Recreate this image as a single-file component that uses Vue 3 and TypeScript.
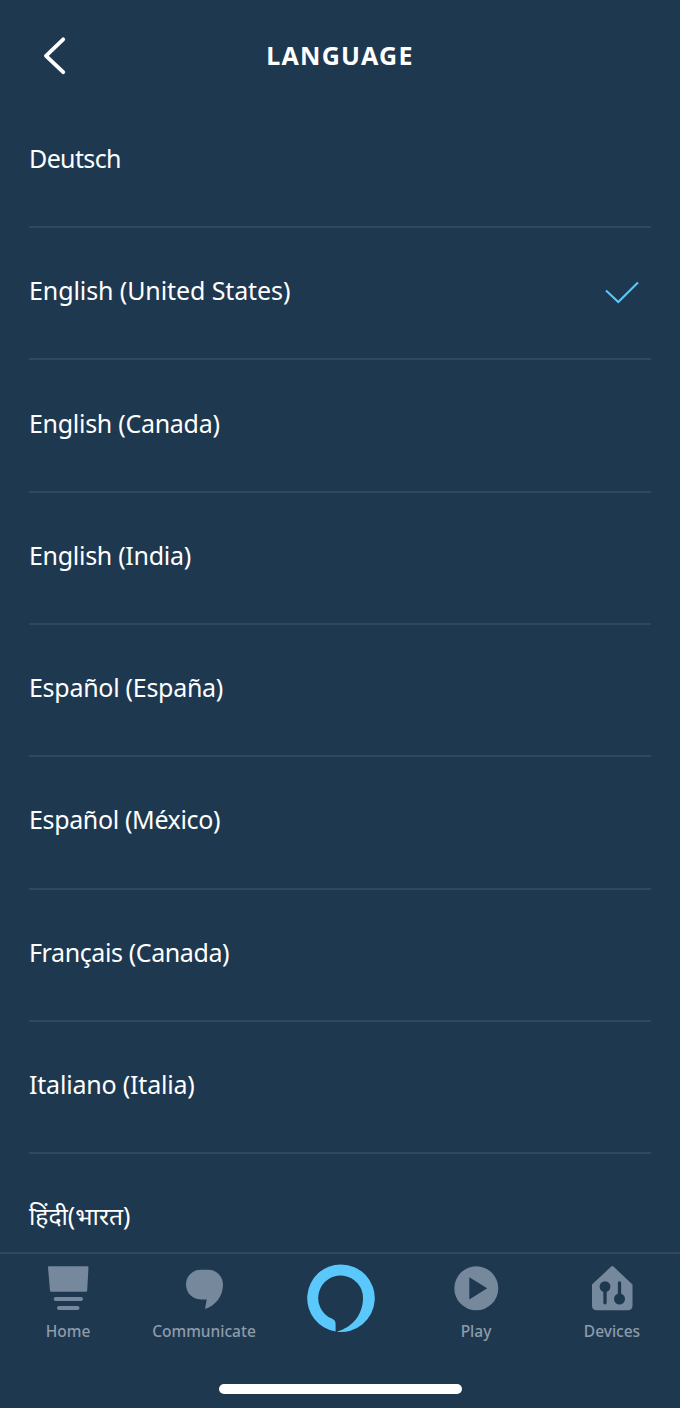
<script setup lang="ts">
interface Language {
  label: string
  spacing: number
  size?: number
  selected?: boolean
}

const languages: Language[] = [
  { label: 'Deutsch', spacing: -0.62 },
  { label: 'English (United States)', spacing: -0.1, selected: true },
  { label: 'English (Canada)', spacing: -0.29 },
  { label: 'English (India)', spacing: -0.3 },
  { label: 'Español (España)', spacing: -0.28 },
  { label: 'Español (México)', spacing: -0.36 },
  { label: 'Français (Canada)', spacing: -0.4 },
  { label: 'Italiano (Italia)', spacing: -0.2 },
  { label: 'हिंदी(भारत)', spacing: 0, size: 24.6 },
]
</script>

<template>
  <div class="screen">
    <header class="header">
      <button class="back" aria-label="Back">
        <svg width="24" height="40" viewBox="0 0 24 40">
          <path d="M20.200 3.300 3 19.800 20.200 36.200" fill="none" stroke="#fff" stroke-width="3.900" stroke-linecap="round" stroke-linejoin="round" />
        </svg>
      </button>
      <h1 class="title">LANGUAGE</h1>
    </header>

    <ul class="list">
      <li v-for="lang in languages" :key="lang.label" class="row">
        <span class="label" :style="{ letterSpacing: lang.spacing + 'px', fontSize: (lang.size ?? 25) + 'px' }">{{ lang.label }}</span>
        <svg v-if="lang.selected" class="check" width="36" height="24" viewBox="0 0 36 24">
          <path d="M2 10.500 14.300 22 34 2.500" fill="none" stroke="#5ac8fa" stroke-width="2.100" />
        </svg>
      </li>
    </ul>

    <footer class="footer">
      <nav class="tabs">
        <a class="tab">
          <svg class="icon" viewBox="0 0 48 48">
            <path d="M5 2.300h38.200q1.300 0 1.250 1.300L43.200 26.400q-.1 1.400-1.500 1.400H7.500q-1.400 0-1.500-1.400L4 3.600q-.1-1.300 1-1.300Z" />
            <rect x="9.700" y="33" width="29.300" height="4" rx="2" />
            <rect x="13" y="42" width="22.500" height="4" rx="2" />
          </svg>
          <span>Home</span>
        </a>
        <a class="tab">
          <svg class="icon" viewBox="0 0 48 48">
            <path d="M20.700 5.800H28.500C36.500 5.800 43 12.300 43 20.500C43 32.500 35.500 41.500 25 45L26.700 35.400H20.700C12.300 35.400 6 29 6 20.600S12.300 5.800 20.700 5.800Z" />
          </svg>
          <span>Communicate</span>
        </a>
        <a class="tab main">
          <svg width="70" height="70" viewBox="0 0 70 70">
            <path fill="#5ac8fa" d="M30.600 68.566A33.800 33.800 0 0 1 36 1.400A33.800 33.800 0 1 1 31.800 68.738C47.500 64.500 58 51.500 58 35.100A22.400 22.400 0 1 0 26.700 55.600C29.300 56.700 30.600 58 30.600 61Z" />
          </svg>
        </a>
        <a class="tab">
          <svg class="icon" viewBox="0 0 48 48">
            <path fill-rule="evenodd" d="M24.300 2.300a22 22 0 1 0 0 44 22 22 0 1 0 0-44ZM17.300 13.300 35.200 24.300 17.300 35.400Z" />
          </svg>
          <span>Play</span>
        </a>
        <a class="tab">
          <svg class="icon" viewBox="0 0 48 48">
            <path d="M22.900 2.800q1.400-1.400 2.800 0L44.500 20.500V41.500Q44.500 46.200 39.800 46.200H8.800Q4 46.200 4 41.500V20.500Z" />
            <g class="cut">
              <circle cx="17" cy="22.600" r="5.400" />
              <circle cx="31.500" cy="35" r="5.500" />
              <path d="M17 24V38.800M31.500 34V18.800" />
            </g>
          </svg>
          <span>Devices</span>
        </a>
      </nav>
      <div class="home-bar"></div>
    </footer>
  </div>
</template>

<style>
body {
  margin: 0;
  background: #1e3850;
}
</style>

<style scoped>
.screen {
  width: 680px;
  height: 1408px;
  display: flex;
  flex-direction: column;
  overflow: hidden;
  background: #1e3850;
  color: #fff;
  font-family: "Noto Sans", "Open Sans", sans-serif;
}

.header {
  flex: none;
  box-sizing: border-box;
  height: 95.700px;
  padding: 35.700px 43px 0;
  display: grid;
  grid-template-columns: 60px 1fr 60px;
  align-items: start;
}

.back {
  display: block;
  width: 24px;
  height: 40px;
  padding: 0;
  border: 0;
  background: none;
}

.back svg {
  display: block;
}

.title {
  margin: 2px 0 0;
  font-size: 25px;
  line-height: 34px;
  font-weight: 700;
  letter-spacing: 1.300px;
  text-align: center;
}

.list {
  flex: 1;
  min-height: 0;
  margin: 0;
  padding: 0 29px;
  overflow: hidden;
  list-style: none;
}

.row {
  box-sizing: border-box;
  height: 132.330px;
  padding: 0 11px 6px 0;
  display: flex;
  align-items: center;
  justify-content: space-between;
  border-bottom: 2px solid #30485e;
}

.row:last-child {
  padding-bottom: 7px;
}

.label {
  line-height: 34px;
  white-space: nowrap;
}

.check {
  margin-top: 3px;
}

.footer {
  flex: none;
  box-sizing: border-box;
  height: 156px;
  border-top: 2px solid #30485e;
  display: flex;
  flex-direction: column;
  align-items: center;
}

.tabs {
  width: 100%;
  height: 130px;
  display: grid;
  grid-template-columns: repeat(5, 1fr);
}

.tab {
  display: flex;
  flex-direction: column;
  align-items: center;
  padding-top: 10px;
  color: #8d9bab;
  font-size: 15.500px;
  line-height: 22px;
  font-weight: 500;
}

.tab span {
  margin-top: 8px;
}

.icon {
  width: 48px;
  height: 48px;
  fill: #76889b;
}

.cut {
  fill: #1e3850;
  stroke: none;
}

.cut path {
  stroke: #1e3850;
  stroke-width: 3.300;
  stroke-linecap: round;
}

.main {
  padding: 9px 0 0;
}

.home-bar {
  width: 243px;
  height: 9.500px;
  border-radius: 5px;
  background: #fff;
}
</style>
